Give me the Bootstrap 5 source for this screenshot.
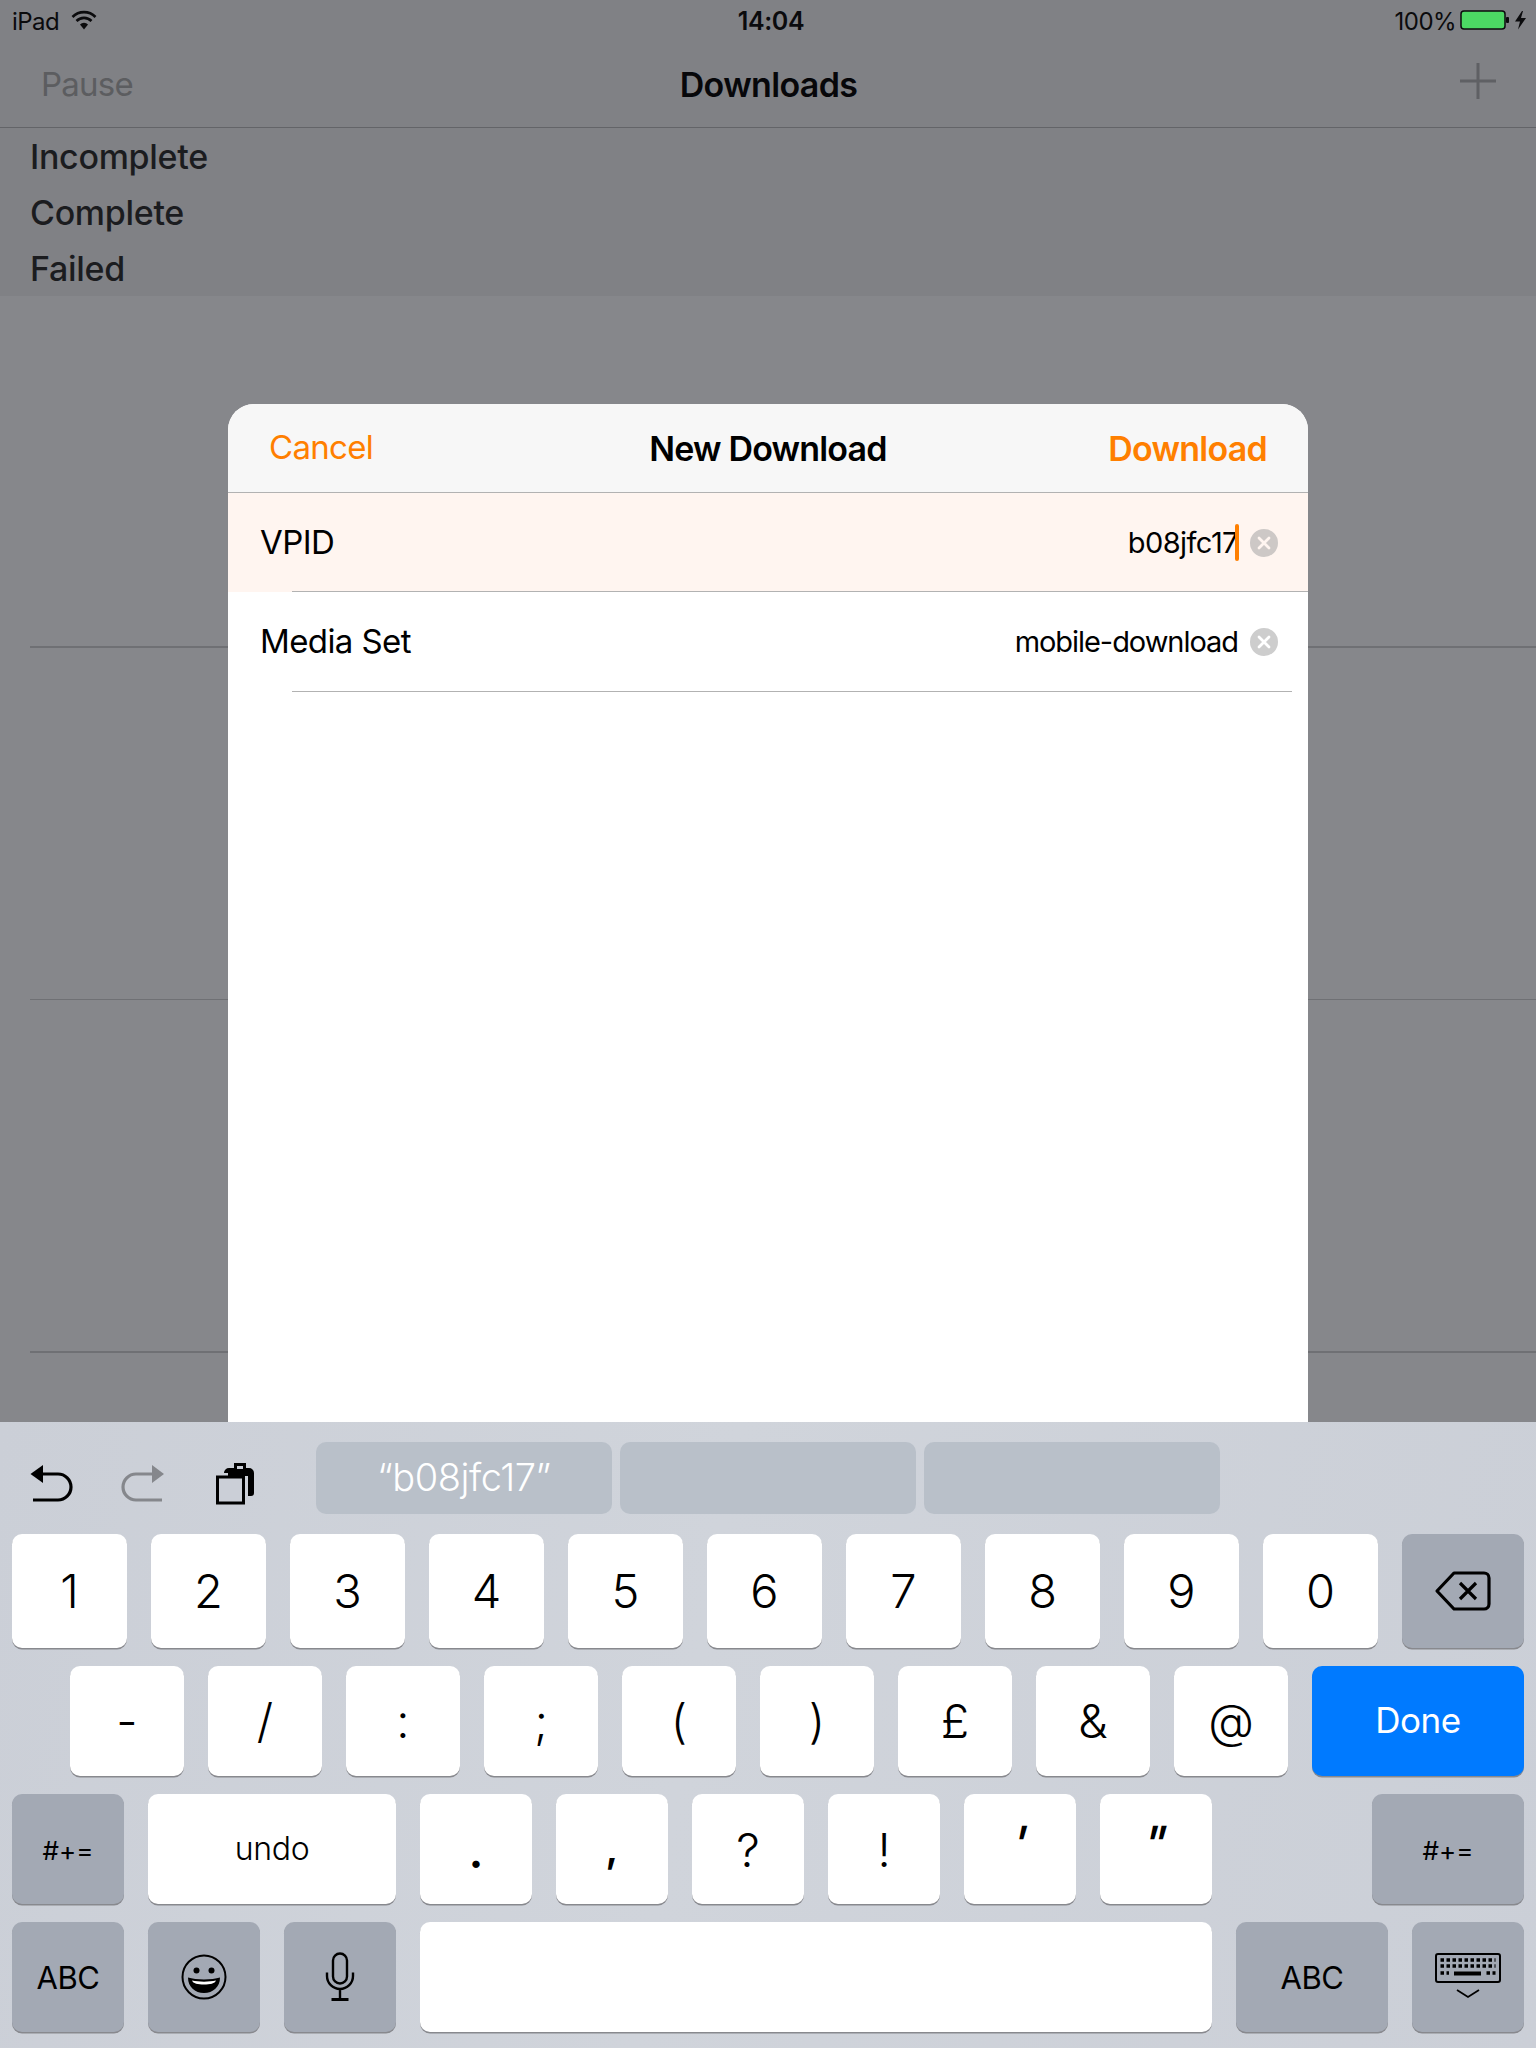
<!DOCTYPE html>
<html lang="en">
<head>
<meta charset="utf-8">
<title>New Download</title>
<link href="https://cdn.jsdelivr.net/npm/bootstrap@5.3.0/dist/css/bootstrap.min.css" rel="stylesheet">
<style>
body{margin:0;background:#86878b;font-family:Inter,"Liberation Sans",sans-serif;color:#000}
.ipad{width:1536px;height:2048px;overflow:hidden;position:relative;background:#86878b}
.topzone{background:#808185}
.statusbar{height:40px;padding:3px 8px 0 12px;font-size:24px;letter-spacing:-.55px;color:#0b0b0d}
.statusbar .clock{font-weight:600;font-size:25px;letter-spacing:-.4px;padding-left:2px}
.statusbar>div{flex:1 1 0}
.wifiicon{margin-left:4px;margin-top:-3px}
.statusicons{margin-top:-3px}
.navrow{height:88px;padding:2px 40px 0 41px;border-bottom:1.5px solid #636468;font-size:33px;letter-spacing:-.75px}
.navrow>div{flex:1 1 0}
.pausetxt{color:#5c5d60}
.navtitle{font-weight:600;font-size:34px;color:#07070a;text-align:center;letter-spacing:-.65px;margin-top:-1px}
.plusicon{margin-bottom:8px}
.seclist{padding-left:30px;height:168px}
.secitem{height:56px;font-size:34px;font-weight:500;letter-spacing:-.3px;color:#1b1c1f}
.bgrule{height:1.5px;background:#6f7074;margin-left:30px}
.rule1{margin-top:350px}.rule2{margin-top:351px}
.sheet{position:absolute;left:228px;top:404px;width:1080px;height:1100px;background:#fff;border-radius:26px 26px 0 0;overflow:hidden}
.sheethead{height:89px;background:#f7f7f7;border-bottom:1.5px solid #b2b2b2;padding:0 41px;font-size:33px;letter-spacing:-.7px}
.sheethead>div{flex:1 1 0}
.accent{color:#ff7f00}
.sheettitle{font-weight:600;font-size:34px;text-align:center;letter-spacing:-.83px}
.accentbold{font-weight:600;font-size:34px;color:#ff7f00;text-align:right;letter-spacing:-.75px}
.fieldrow{height:99px;padding:0 30px 0 32px;position:relative;font-size:33px;letter-spacing:-.6px}
.fieldfocus{background:#fff5f0}
.fieldrow::after{content:"";position:absolute;left:64px;right:0;bottom:0;height:1.5px;background:#b2b2b2}
.fieldlast{height:100px}
.fieldlast::after{right:16px}
.fieldval{font-size:29px;letter-spacing:-.55px;margin-right:12px}
.fieldtight{letter-spacing:-1.05px}
.caret{width:4px;height:37px;background:#ff7f00;border-radius:2px;margin-left:-3px;margin-right:11px}
.keyboard{position:absolute;left:0;right:0;bottom:0;height:626px;background:linear-gradient(100deg,#cbcfd7 0%,#d0d4db 45%,#cbcfd7 100%);z-index:5}
.toolrow{height:112px;padding-top:20px}
.toolicons{width:316px;height:72px;position:relative}
.toolicons svg{position:absolute;left:0;top:0}
.pills{gap:8px}
.pilltile{width:296px;height:72px;background:#b9c0c9;border-radius:10px;color:#fff;font-size:38px;font-weight:300;letter-spacing:-.45px;padding-bottom:1px}
.keyrow{padding:0 12px;gap:24px}
.row1{height:114px;margin-bottom:18px}
.row2{height:110px;margin-bottom:18px;padding-left:70px}
.row3,.row4{height:110px}
.row3{margin-bottom:18px}
.kkey{width:112px;height:100%;background:#fff;border-radius:10px;box-shadow:0 1.5px 0 #88898e;font-size:47px;font-weight:300;line-height:1;flex:none}
.row1 .kkey{width:115px;padding-bottom:1px}
.row2 .kkey{width:114px;padding-bottom:2px}
.kdark{background:#a3a9b4}
.row1 .kdel{width:122px}
.row2 .kdone{width:212px;background:#007aff;color:#fff;font-size:35px;font-weight:400;letter-spacing:-.4px}
.kundo{width:248px;font-size:32px;font-weight:300;letter-spacing:-.3px}
.ksmall{font-size:26px;font-weight:400;padding-top:3px}
.kabc{font-size:31px;font-weight:400;letter-spacing:-.4px}
.kmore{width:152px;margin-left:136px}
.kspace{width:792px}
.kabc2{width:152px}
.lowglyph{transform:translateY(1px);font-weight:600}
.highglyph{transform:translateY(-7px) skewX(-14deg);font-weight:500}
.commaglyph{transform:translateY(-1px);font-weight:600;font-size:40px}
</style>
</head>
<body>
<div class="ipad">
  <div class="topzone">
    <div class="statusbar d-flex align-items-center">
      <div class="d-flex align-items-center gap-2">
        <span>iPad</span>
        <svg class="wifiicon" width="26" height="20" viewBox="0 0 26 20"><g fill="none" stroke="#0b0b0d" stroke-width="2.600"><path d="M1.500 7a16 16 0 0 1 23 0"/><path d="M5.500 11a10.500 10.500 0 0 1 15 0"/></g><path d="M9 14.500a5.500 5.500 0 0 1 8 0L13 19.500z" fill="#0b0b0d"/></svg>
      </div>
      <div class="clock text-center">14:04</div>
      <div class="d-flex align-items-center justify-content-end">
        <span class="me-1">100%</span>
        <svg class="statusicons" width="68" height="20" viewBox="0 0 68 20"><rect x="1" y="1" width="44" height="18" rx="3" fill="#4cd964" stroke="#0b0b0d" stroke-width="1.500"/><rect x="46" y="7" width="3" height="6" rx="1" fill="#0b0b0d"/><path d="M62 1 55 11.500h5L58 19.500 66 8h-5l2-7z" fill="#0b0b0d"/></svg>
      </div>
    </div>
    <div class="navrow d-flex align-items-center">
      <div class="pausetxt">Pause</div>
      <div class="navtitle">Downloads</div>
      <div class="d-flex justify-content-end">
        <svg class="plusicon" width="36" height="36" viewBox="0 0 36 36"><path d="M18 0V36M0 18H36" stroke="#5f6064" stroke-width="3"/></svg>
      </div>
    </div>
    <div class="seclist">
      <div class="secitem d-flex align-items-center">Incomplete</div>
      <div class="secitem d-flex align-items-center">Complete</div>
      <div class="secitem d-flex align-items-center">Failed</div>
    </div>
  </div>
  <div class="bgrule rule1"></div>
  <div class="bgrule rule2"></div>
  <div class="bgrule rule2"></div>

  <div class="sheet">
    <div class="sheethead d-flex align-items-center">
      <div class="accent">Cancel</div>
      <div class="sheettitle text-nowrap">New Download</div>
      <div class="accentbold">Download</div>
    </div>
    <div class="fieldrow fieldfocus d-flex align-items-center">
      <span class="me-auto">VPID</span>
      <span class="fieldval me-0">b08jfc17</span>
      <span class="caret"></span>
      <svg width="28" height="28" viewBox="0 0 28 28"><circle cx="14" cy="14" r="14" fill="#cdc8c6"/><path d="M9 9l10 10M19 9 9 19" stroke="#fff5f0" stroke-width="2.800" stroke-linecap="round"/></svg>
    </div>
    <div class="fieldrow fieldlast d-flex align-items-center">
      <span class="me-auto">Media Set</span>
      <span class="fieldval fieldtight">mobile-download</span>
      <svg width="28" height="28" viewBox="0 0 28 28"><circle cx="14" cy="14" r="14" fill="#cdcdcd"/><path d="M9 9l10 10M19 9 9 19" stroke="#fff" stroke-width="2.800" stroke-linecap="round"/></svg>
    </div>
  </div>

  <div class="keyboard">
    <div class="toolrow d-flex">
      <div class="toolicons">
        <svg width="316" height="72" viewBox="0 1442 316 72">
          <path d="M43 1474H58A13 13 0 0 1 58 1500H33" fill="none" stroke="#000" stroke-width="3.200"/>
          <path d="M30.500 1474 43 1465V1483z" fill="#000"/>
          <path d="M152 1474H136A13 13 0 0 0 136 1500H162" fill="none" stroke="#85878c" stroke-width="3.200"/>
          <path d="M164 1474 152 1465V1483z" fill="#85878c"/>
          <path d="M224 1473a5 5 0 0 1 5-5h5v-5h12v5h3a5 5 0 0 1 5 5v20a3 3 0 0 1-3 3h-3V1476h-20v-3z" fill="#000"/>
          <rect x="237" y="1466" width="6" height="3" fill="#cbcfd7"/>
          <rect x="217.500" y="1477" width="26" height="26" fill="#cbcfd7" stroke="#000" stroke-width="3"/>
        </svg>
      </div>
      <div class="pills d-flex">
        <div class="pilltile d-flex align-items-center justify-content-center">“b08jfc17”</div>
        <div class="pilltile"></div>
        <div class="pilltile"></div>
      </div>
    </div>
    <div class="keyrow row1 d-flex">
      <div class="kkey d-flex align-items-center justify-content-center">1</div>
      <div class="kkey d-flex align-items-center justify-content-center">2</div>
      <div class="kkey d-flex align-items-center justify-content-center">3</div>
      <div class="kkey d-flex align-items-center justify-content-center">4</div>
      <div class="kkey d-flex align-items-center justify-content-center">5</div>
      <div class="kkey d-flex align-items-center justify-content-center">6</div>
      <div class="kkey d-flex align-items-center justify-content-center">7</div>
      <div class="kkey d-flex align-items-center justify-content-center">8</div>
      <div class="kkey d-flex align-items-center justify-content-center">9</div>
      <div class="kkey d-flex align-items-center justify-content-center">0</div>
      <div class="kkey kdark kdel d-flex align-items-center justify-content-center">
        <svg width="58" height="42" viewBox="0 0 58 42"><path d="M20 3H50a5 5 0 0 1 5 5V34a5 5 0 0 1-5 5H20L3 21z" fill="none" stroke="#000" stroke-width="3.200" stroke-linejoin="round"/><path d="M26 13 42 29M42 13 26 29" stroke="#000" stroke-width="3.200"/></svg>
      </div>
    </div>
    <div class="keyrow row2 d-flex">
      <div class="kkey d-flex align-items-center justify-content-center">-</div>
      <div class="kkey d-flex align-items-center justify-content-center">/</div>
      <div class="kkey d-flex align-items-center justify-content-center">:</div>
      <div class="kkey d-flex align-items-center justify-content-center">;</div>
      <div class="kkey d-flex align-items-center justify-content-center">(</div>
      <div class="kkey d-flex align-items-center justify-content-center">)</div>
      <div class="kkey d-flex align-items-center justify-content-center">£</div>
      <div class="kkey d-flex align-items-center justify-content-center">&amp;</div>
      <div class="kkey d-flex align-items-center justify-content-center">@</div>
      <div class="kkey kdone d-flex align-items-center justify-content-center">Done</div>
    </div>
    <div class="keyrow row3 d-flex">
      <div class="kkey kdark ksmall d-flex align-items-center justify-content-center">#+=</div>
      <div class="kkey kundo d-flex align-items-center justify-content-center">undo</div>
      <div class="kkey d-flex align-items-center justify-content-center"><span class="lowglyph">.</span></div>
      <div class="kkey d-flex align-items-center justify-content-center"><span class="commaglyph">,</span></div>
      <div class="kkey d-flex align-items-center justify-content-center">?</div>
      <div class="kkey d-flex align-items-center justify-content-center">!</div>
      <div class="kkey d-flex align-items-center justify-content-center"><span class="highglyph">'</span></div>
      <div class="kkey d-flex align-items-center justify-content-center"><span class="highglyph">"</span></div>
      <div class="kkey kdark ksmall kmore d-flex align-items-center justify-content-center">#+=</div>
    </div>
    <div class="keyrow row4 d-flex">
      <div class="kkey kdark kabc d-flex align-items-center justify-content-center">ABC</div>
      <div class="kkey kdark d-flex align-items-center justify-content-center">
        <svg width="46" height="46" viewBox="0 0 46 46"><circle cx="23" cy="23" r="21.500" fill="none" stroke="#000" stroke-width="2"/><circle cx="15.500" cy="16.500" r="3" fill="#000"/><circle cx="30.500" cy="16.500" r="3" fill="#000"/><path d="M7 23.500C15 26 31 26 39 23.500 39 33 32 39 23 39S7 33 7 23.500z" fill="#000"/><path d="M11 26.500C18 28 28 28 35 26.500 34 29.500 29 30.500 23 30.500S12 29.500 11 26.500z" fill="#fff"/></svg>
      </div>
      <div class="kkey kdark d-flex align-items-center justify-content-center">
        <svg width="30" height="50" viewBox="0 0 30 50"><rect x="8" y="1.500" width="14" height="30" rx="7" fill="none" stroke="#000" stroke-width="2.400"/><path d="M2 20.500V24a13 13 0 0 0 26 0V20.500M15 37V46" fill="none" stroke="#000" stroke-width="2.400"/><path d="M6.500 47.500H23.500" stroke="#000" stroke-width="3"/></svg>
      </div>
      <div class="kkey kspace"></div>
      <div class="kkey kdark kabc kabc2 d-flex align-items-center justify-content-center">ABC</div>
      <div class="kkey kdark d-flex align-items-center justify-content-center">
        <svg width="66" height="48" viewBox="0 0 66 48">
          <rect x="1" y="1" width="64" height="28" rx="2" fill="none" stroke="#000" stroke-width="2"/>
          <path d="M5.500 7H60.500M5.500 13H60.500" stroke="#000" stroke-width="3.500" stroke-dasharray="3.500 2.500"/>
          <path d="M5.500 20H14M51.500 20H60.500" stroke="#000" stroke-width="3.500" stroke-dasharray="3.500 2.500"/>
          <path d="M19 20.500H46" stroke="#000" stroke-width="4"/>
          <path d="M22 37 33 44 44 37" fill="none" stroke="#000" stroke-width="1.800"/>
        </svg>
      </div>
    </div>
  </div>
</div>
<script src="https://cdn.jsdelivr.net/npm/bootstrap@5.3.0/dist/js/bootstrap.bundle.min.js"></script>
</body>
</html>
